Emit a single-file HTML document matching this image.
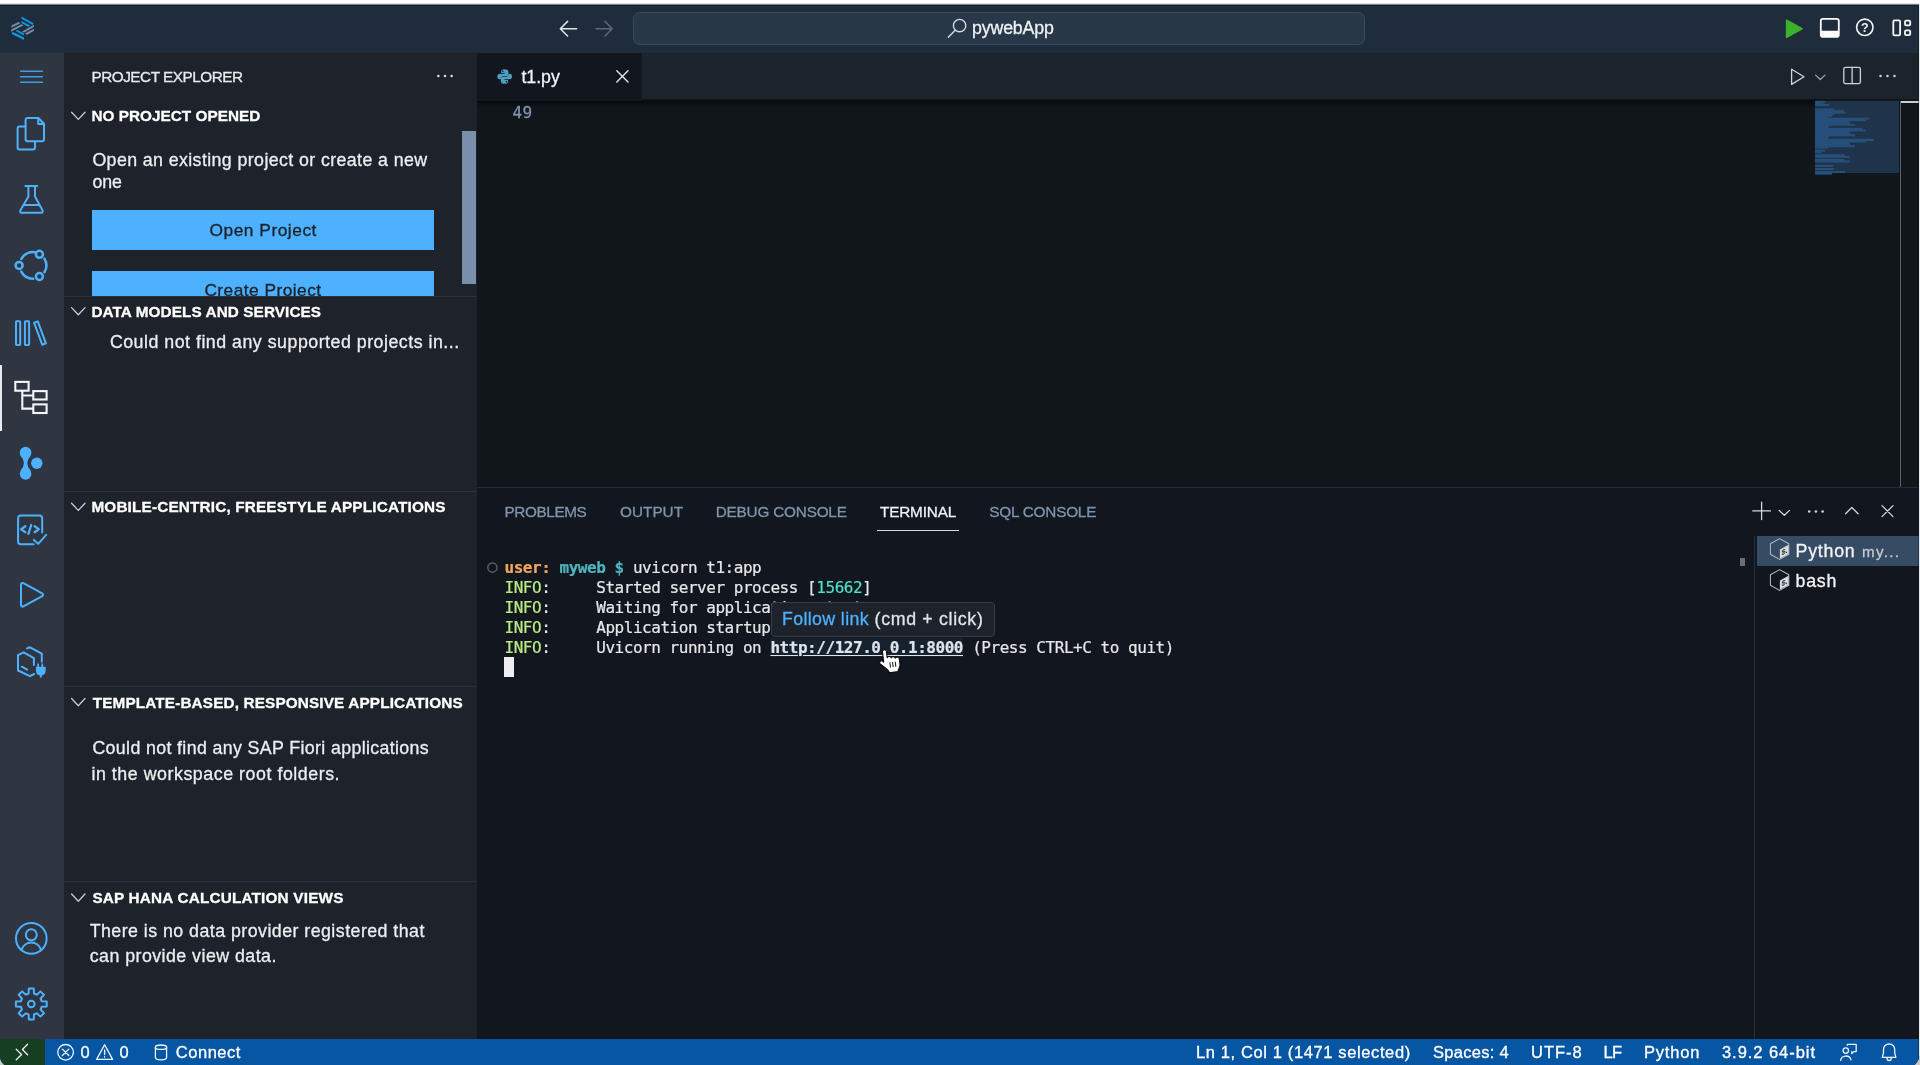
<!DOCTYPE html>
<html lang="en"><head><meta charset="utf-8"><title>pywebApp - SAP Business Application Studio</title>
<style>
html,body{margin:0;padding:0}
body{width:1920px;height:1065px;overflow:hidden;background:#c9c9c9;position:relative;font-family:"Liberation Sans",sans-serif}
.t{position:absolute;white-space:pre;display:block;font-family:"Liberation Sans",sans-serif;-webkit-text-stroke:0.3px currentColor}
.m{font-family:"DejaVu Sans Mono","Liberation Mono",monospace}
.a{position:absolute}
svg{position:absolute;left:0;top:0;overflow:visible}
#win{will-change:transform;position:absolute;left:0;top:0;width:1919px;height:1067px;overflow:hidden;border-radius:0 0 11px 11px;background:#12161e}
#titlebar{left:0;top:5px;width:1919px;height:48px;background:#1e2c3c}
#cmd{left:633px;top:12px;width:730px;height:31px;border:1px solid #3b4a5c;border-radius:7px;background:#283849}
#activity{left:0;top:53px;width:64px;height:986px;background:#2f3541}
#sidebar{left:64px;top:53px;width:413px;height:986px;background:#1d222b}
#tabs{left:477px;top:53px;width:1442px;height:46px;background:#1d232c}
#tab1{left:477px;top:53px;width:165px;height:47.5px;background:#12161e}
#editor{left:477px;top:99px;width:1442px;height:388px;background:#11161a}
#panel{left:477px;top:487px;width:1442px;height:552px;background:#12161e;border-top:1px solid #242c37;box-sizing:border-box}
#status{left:0;top:1039px;width:1919px;height:26px;background:#0756a3}
#remote{left:0;top:1039px;width:45px;height:26px;background:#153f20}
.sep{left:64px;width:413px;height:1px;background:#2b313c}
.btn{left:92px;width:342px;background:#4db1ff}
.term{position:absolute;left:504.5px;white-space:pre;font:400 16px/20px "DejaVu Sans Mono","Liberation Mono",monospace;letter-spacing:-0.463px;color:#e6e7e9;height:20px;-webkit-text-stroke:0.2px currentColor}
.term b{font-weight:700}
</style></head><body>
<div id="win">
<div class="a" style="left:0;top:0;width:1920px;height:3px;background:#fff"></div>
<div class="a" style="left:0;top:3px;width:1920px;height:1px;background:#e3e4e5"></div>
<div class="a" style="left:0;top:4px;width:1920px;height:1px;background:#7a828c"></div>

<!-- ================= TITLE BAR ================= -->
<div id="titlebar" class="a"></div>
<div class="a" style="left:0;top:5px;width:1919px;height:1px;background:#0f1f33"></div>
<div id="cmd" class="a"></div>
<span class="t" style="left:972px;top:17px;font-size:17.8px;line-height:22px;letter-spacing:-0.164px;color:#f0f2f4">pywebApp</span>
<svg width="1920" height="60" viewBox="0 0 1920 60">
  <!-- logo -->
  <g transform="translate(4,10) scale(0.033812)">
    <polygon points="515,195 875,395 850,445 515,262" fill="#0a9be0"/>
    <polygon points="520,322 770,462 720,505 520,385" fill="#0a9be0"/>
    <polygon points="222,458 430,352 485,390 222,525" fill="#748ca8"/>
    <polygon points="212,578 515,418 580,452 212,640" fill="#748ca8"/>
    <polygon points="340,622 392,588 590,690 590,755" fill="#0a9be0"/>
    <polygon points="232,655 282,655 592,815 592,885 232,708" fill="#0a9be0"/>
    <polygon points="528,640 882,438 882,502 600,668" fill="#748ca8"/>
    <polygon points="618,692 882,558 882,622 682,732" fill="#748ca8"/>
  </g>
  <!-- nav arrows -->
  <g fill="none" stroke="#e2e5e9" stroke-width="1.5" stroke-linecap="round" stroke-linejoin="round">
    <path d="M576.6,28.7 H560.3 M567.6,21.4 L560.3,28.7 L567.6,36"/>
  </g>
  <g fill="none" stroke="#5b6878" stroke-width="1.5" stroke-linecap="round" stroke-linejoin="round">
    <path d="M596,28.7 H612.2 M605,21.4 L612.2,28.7 L605,36"/>
  </g>
  <!-- search -->
  <g fill="none" stroke="#d5d9de" stroke-width="1.4" stroke-linecap="round">
    <circle cx="959.6" cy="25.6" r="6.2"/><path d="M955.2,30.2 L948.3,37.2"/>
  </g>
  <!-- run (green) -->
  <path d="M1786.6,20.2 L1802,28.7 L1786.6,37.3 Z" fill="#3cb22b" stroke="#3cb22b" stroke-width="1.6" stroke-linejoin="round"/>
  <!-- panel toggle -->
  <rect x="1820.8" y="18.9" width="18" height="18" rx="2.2" fill="none" stroke="#fafbfc" stroke-width="1.8"/>
  <path d="M1820.8,30.8 H1838.8 V35 a2,2 0 0 1 -2,2 H1822.8 a2,2 0 0 1 -2,-2 Z" fill="#fdfdfe"/>
  <!-- help -->
  <circle cx="1864.8" cy="27.3" r="8.2" fill="none" stroke="#f6f7f8" stroke-width="1.6"/>
  <text x="1864.8" y="31.8" text-anchor="middle" font-family="Liberation Sans, sans-serif" font-weight="700" font-size="12.5" fill="#f0f1f3">?</text>
  <!-- layout -->
  <g fill="none" stroke="#f6f7f8" stroke-width="1.8">
    <rect x="1893.3" y="20.3" width="6.8" height="15" rx="1.3"/>
    <rect x="1905" y="20.6" width="5.2" height="4.8" rx="1.2"/>
    <rect x="1905" y="30.3" width="5.2" height="4.8" rx="1.2"/>
  </g>
</svg>

<!-- ================= ACTIVITY BAR ================= -->
<div id="activity" class="a"></div>
<div class="a" style="left:0;top:365px;width:1.5px;height:66px;background:#e9ebee"></div>
<svg width="64" height="1040" viewBox="0 0 64 1040">
  <g fill="none" stroke="#3f9fe6" stroke-width="1.4" stroke-linecap="round">
    <path d="M20.6,71.3 H42.4 M20.6,76.8 H42.4 M20.6,82.2 H42.4"/>
  </g>
  <g fill="none" stroke="#4db1ff" stroke-width="2" stroke-linecap="round" stroke-linejoin="round">
    <!-- files -->
    <path d="M27.6,118 H38.4 L44,123.8 V139.2 a2,2 0 0 1 -2,2 H27.6 a2,2 0 0 1 -2,-2 V120 a2,2 0 0 1 2,-2 Z M38.2,118.4 V124 H43.8"/>
    <path d="M25.4,126.6 H19.6 a2,2 0 0 0 -2,2 V147.6 a2,2 0 0 0 2,2 H33 a2,2 0 0 0 2,-2 V141.4"/>
    <!-- flask -->
    <path d="M25.4,186.1 H37.2 M28.4,186.4 V196.6 L20.3,210.6 a1.4,1.4 0 0 0 1.2,2.1 H41.4 a1.4,1.4 0 0 0 1.2,-2.1 L35,196.6 V186.4 M24.6,205 H38.6"/>
    <!-- graph -->
    <g stroke-width="2.5"><path d="M44.4,258.55 A13.3,13.3 0 0 1 44.4,272.25 M33.23,278.7 A13.3,13.3 0 0 1 21.26,271.64 M21.37,258.95 A13.3,13.3 0 0 1 35.08,252.26"/>
    <circle cx="39.4" cy="254.3" r="3.5"/><circle cx="19.1" cy="265.4" r="3.5"/><circle cx="39.4" cy="276.5" r="3.5"/></g>
    <!-- books -->
    <rect x="16" y="321.3" width="4.2" height="23.6" rx="0.6"/>
    <rect x="24.9" y="321.3" width="4.2" height="23.6" rx="0.6"/>
    <path d="M34.1,322.7 L37.8,321.4 L45.9,343.3 L42.2,344.7 Z"/>
    <!-- code check -->
    <path d="M42.2,532.6 V518.4 a2.8,2.8 0 0 0 -2.8,-2.8 H20.9 a2.8,2.8 0 0 0 -2.8,2.8 V541.5 a2.8,2.8 0 0 0 2.8,2.8 H33.6"/>
    <path d="M33.8,539.9 L38.2,543.8 L46.2,534.9" />
    <path stroke-width="2.3" d="M25.4,526.2 L21.2,529.2 L25.4,532.2 M31.2,525 L28.4,533.8 M34.6,526.2 L38.8,529.2 L34.6,532.2"/>
    <!-- run -->
    <path d="M21,584.6 a1.6,1.6 0 0 1 2.4,-1.4 L42.2,593.4 a1.6,1.6 0 0 1 0,2.8 L23.4,606.4 a1.6,1.6 0 0 1 -2.4,-1.4 Z"/>
    <!-- box plug -->
    <path d="M33.9,665 V658.2 L23.7,652.3 L18,655.2 V670.5 L29.9,676.2 L34.2,674"/>
    <path d="M27,648.4 L30,647.3 L41.8,653.6 V661.8"/>
    <path d="M21.8,666.7 L27.2,669.6"/>
    <!-- account -->
    <circle cx="31.3" cy="938.4" r="15.3"/>
    <circle cx="31.3" cy="934.8" r="5.5"/>
    <path d="M21.6,949.8 a10.2,10.5 0 0 1 19.4,0"/>
    <!-- gear -->
    <path d="M28.61,993.54 L28.86,988.59 L33.74,988.59 L33.99,993.54 L36.8,994.7 L40.47,991.38 L43.92,994.83 L40.6,998.5 L41.76,1001.31 L46.71,1001.56 L46.71,1006.44 L41.76,1006.69 L40.6,1009.5 L43.92,1013.17 L40.47,1016.62 L36.8,1013.3 L33.99,1014.46 L33.74,1019.41 L28.86,1019.41 L28.61,1014.46 L25.8,1013.3 L22.13,1016.62 L18.68,1013.17 L22,1009.5 L20.84,1006.69 L15.89,1006.44 L15.89,1001.56 L20.84,1001.31 L22,998.5 L18.68,994.83 L22.13,991.38 L25.8,994.7Z"/>
    <circle cx="31.3" cy="1004" r="3.3"/>
  </g>
  <!-- plug (filled) -->
  <path d="M37.3,663.4 h1.7 v3.4 h2.4 v-3.4 h1.7 v3.4 h2.6 v3.6 a5.4,5.4 0 0 1 -4,5.2 v1.9 h-1.8 v-1.9 a5.4,5.4 0 0 1 -4,-5.2 v-3.6 h1.4 Z" fill="#4db1ff"/>
  <!-- tree (active, white) -->
  <g fill="none" stroke="#f4f5f6" stroke-width="2.1">
    <rect x="15.3" y="381.9" width="13.3" height="8.8"/>
    <rect x="33.3" y="391.1" width="13.3" height="8.4"/>
    <rect x="33.3" y="404.4" width="13.3" height="8.6"/>
    <path d="M22.3,391 V408.6 H33 M22.3,395.5 H33"/>
  </g>
  <!-- source control blob -->
  <g fill="#4db1ff">
    <circle cx="25.6" cy="452.5" r="5.8"/><circle cx="25.6" cy="474" r="5.8"/><circle cx="36.8" cy="463.2" r="5.7"/>
    <path d="M20.3,455.6 Q27.6,463.2 20.3,470.8 L30.9,470.8 Q23.6,463.2 30.9,455.6 Z"/>
  </g>
</svg>

<!-- ================= SIDE BAR ================= -->
<div id="sidebar" class="a"></div>
<span class="t" style="left:91.4px;top:67px;font-size:15.3px;line-height:19px;letter-spacing:-0.467px;color:#e8eaed">PROJECT EXPLORER</span>
<span class="t" style="left:91.4px;top:106px;font-size:15.3px;line-height:19px;font-weight:700;letter-spacing:0.041px;color:#ffffff">NO PROJECT OPENED</span>
<span class="t" style="left:92.4px;top:149px;font-size:17.8px;line-height:22px;letter-spacing:0.395px;color:#eceef0">Open an existing project or create a new</span>
<span class="t" style="left:92.4px;top:171px;font-size:17.8px;line-height:22px;letter-spacing:-0.089px;color:#eceef0">one</span>
<div class="a btn" style="top:210px;height:40px"></div>
<span class="t" style="left:209.5px;top:219px;font-size:17.33px;line-height:22px;letter-spacing:0.525px;color:#1b2129">Open Project</span>
<div class="a" style="left:92px;top:271px;width:342px;height:26px;overflow:hidden;background:#4db1ff"></div>
<div class="a" style="left:64px;top:260px;width:413px;height:37px;overflow:hidden"><div style="position:absolute;left:-64px;top:-260px;width:600px;height:400px"><span class="t" style="left:204.4px;top:279px;font-size:17.33px;line-height:22px;letter-spacing:0.458px;color:#1b2129">Create Project</span></div></div>
<div class="a" style="left:461.5px;top:131px;width:14px;height:153px;background:#798fab"></div>
<div class="a sep" style="top:296px"></div>
<span class="t" style="left:91.4px;top:302px;font-size:15.3px;line-height:19px;font-weight:700;letter-spacing:0.095px;color:#ffffff">DATA MODELS AND SERVICES</span>
<span class="t" style="left:109.9px;top:331px;font-size:17.8px;line-height:22px;letter-spacing:0.502px;color:#eceef0">Could not find any supported projects in...</span>
<div class="a sep" style="top:491px"></div>
<span class="t" style="left:91.4px;top:497px;font-size:15.3px;line-height:19px;font-weight:700;letter-spacing:0.174px;color:#ffffff">MOBILE-CENTRIC, FREESTYLE APPLICATIONS</span>
<div class="a sep" style="top:686px"></div>
<span class="t" style="left:92.7px;top:693px;font-size:15.3px;line-height:19px;font-weight:700;letter-spacing:0.148px;color:#ffffff">TEMPLATE-BASED, RESPONSIVE APPLICATIONS</span>
<span class="t" style="left:92.4px;top:737px;font-size:17.8px;line-height:22px;letter-spacing:0.362px;color:#eceef0">Could not find any SAP Fiori applications</span>
<span class="t" style="left:91.4px;top:763px;font-size:17.8px;line-height:22px;letter-spacing:0.548px;color:#eceef0">in the workspace root folders.</span>
<div class="a sep" style="top:881px"></div>
<span class="t" style="left:92.4px;top:888px;font-size:15.3px;line-height:19px;font-weight:700;letter-spacing:0.192px;color:#ffffff">SAP HANA CALCULATION VIEWS</span>
<span class="t" style="left:89.7px;top:920px;font-size:17.8px;line-height:22px;letter-spacing:0.461px;color:#eceef0">There is no data provider registered that</span>
<span class="t" style="left:89.7px;top:945px;font-size:17.8px;line-height:22px;letter-spacing:0.463px;color:#eceef0">can provide view data.</span>
<svg width="480" height="1040" viewBox="0 0 480 1040">
  <g fill="#d9dce0"><circle cx="438.4" cy="76" r="1.25"/><circle cx="445" cy="76" r="1.25"/><circle cx="451.6" cy="76" r="1.25"/></g>
  <g fill="none" stroke="#c9cdd3" stroke-width="1.3" stroke-linecap="round" stroke-linejoin="round"><path d="M71.6,112.2 L78.3,119.4 L85,112.2"/><path d="M71.6,307.6 L78.3,314.8 L85,307.6"/><path d="M71.6,503.2 L78.3,510.4 L85,503.2"/><path d="M71.6,698.5 L78.3,705.7 L85,698.5"/><path d="M71.6,894 L78.3,901.2 L85,894"/></g>
</svg>

<!-- ================= EDITOR ================= -->
<div id="tabs" class="a"></div>
<div id="editor" class="a"></div>
<div class="a" style="left:477px;top:99px;width:1338px;height:9px;background:linear-gradient(rgba(5,7,10,0) 0,rgba(5,7,10,0.75) 28%,rgba(5,7,10,0.45) 50%,rgba(5,7,10,0) 100%)"></div>
<div id="tab1" class="a"></div>
<span class="t" style="left:521.4px;top:66px;font-size:17.8px;line-height:22px;letter-spacing:-0.015px;color:#f2f3f5">t1.py</span>
<span class="t m" style="left:512.6px;top:103px;font-size:16px;line-height:20px;letter-spacing:0.367px;color:#7f94ad">49</span>
<div class="a" style="left:1815px;top:101px;width:84px;height:72px;background:#1f344b"></div>
<div class="a" style="left:1900px;top:101px;width:1px;height:386px;background:#56616e"></div>
<div class="a" style="left:1901px;top:101px;width:18px;height:2px;background:#c9cdd2"></div>
<svg width="1920" height="200" viewBox="0 0 1920 200">
  <g fill="#26507b"><rect x="1815.1" y="100.85" width="9.8" height="2"/><rect x="1815.1" y="102.4" width="8.3" height="2"/><rect x="1815.1" y="103.95" width="13.9" height="2"/><rect x="1815.1" y="108.6" width="19.1" height="2"/><rect x="1815.1" y="110.14" width="28.9" height="2"/><rect x="1815.1" y="111.69" width="30.7" height="2"/><rect x="1815.1" y="113.24" width="19.1" height="2"/><rect x="1815.1" y="114.79" width="17" height="2"/><rect x="1815.1" y="116.34" width="12.9" height="1.79"/><rect x="1815.1" y="117.69" width="53.7" height="1.9"/><rect x="1815.1" y="119.13" width="50.6" height="2"/><rect x="1815.1" y="120.68" width="34.1" height="2"/><rect x="1815.1" y="122.23" width="35.1" height="2"/><rect x="1815.1" y="123.78" width="39.8" height="2"/><rect x="1815.1" y="125.33" width="13.9" height="2"/><rect x="1815.1" y="126.88" width="12.9" height="1.48"/><rect x="1815.1" y="127.91" width="47.5" height="2"/><rect x="1815.1" y="129.46" width="50.6" height="2"/><rect x="1815.1" y="131.01" width="34.1" height="2"/><rect x="1815.1" y="132.56" width="35.1" height="2"/><rect x="1815.1" y="134.11" width="39.8" height="2.31"/><rect x="1815.1" y="135.97" width="13.9" height="2"/><rect x="1815.1" y="137.52" width="12.9" height="1.69"/><rect x="1815.1" y="138.76" width="58.9" height="2.31"/><rect x="1815.1" y="140.62" width="50.6" height="1.79"/><rect x="1815.1" y="141.96" width="34.1" height="2"/><rect x="1815.1" y="143.51" width="35.1" height="2"/><rect x="1815.1" y="145.06" width="39.8" height="2.21"/><rect x="1815.1" y="146.82" width="12.9" height="1.69"/><rect x="1815.1" y="149.61" width="9.8" height="2"/><rect x="1815.1" y="151.16" width="6.7" height="2"/><rect x="1815.1" y="154.26" width="29.8" height="2"/><rect x="1815.1" y="155.81" width="34.6" height="2"/><rect x="1815.1" y="158.9" width="28.9" height="2"/><rect x="1815.1" y="160.45" width="34.6" height="2"/><rect x="1815.1" y="164.9" width="17.8" height="2"/><rect x="1815.1" y="168" width="19.1" height="2"/><rect x="1815.1" y="171.1" width="30" height="2"/><rect x="1815.1" y="172.64" width="16.8" height="2"/></g>
  <!-- python file icon -->
  <g transform="translate(496.8,68.7) scale(0.967,0.96)"><path d="M7.9,0.5C5.5,0.5 4.6,1.5 4.6,2.9L4.6,4.6L8.1,4.6L8.1,5.2L3.2,5.2C1.5,5.2 0.5,6.5 0.5,8.2C0.5,10 1.4,11.1 2.9,11.1L4.3,11.1L4.3,9.9C4.3,8.7 5.3,7.9 6.5,7.9L10,7.9C11.2,7.9 12,7 12,5.9L12,2.9C12,1.5 10.6,0.5 7.9,0.5Z" fill="#4f9dc2"/><path d="M8.3,15.8C10.7,15.8 11.6,14.8 11.6,13.4L11.6,11.7L8.1,11.7L8.1,11.1L13,11.1C14.7,11.1 15.7,9.8 15.7,8.1C15.7,6.3 14.8,5.2 13.3,5.2L11.9,5.2L11.9,6.4C11.9,7.6 10.9,8.4 9.7,8.4L6.2,8.4C5,8.4 4.2,9.3 4.2,10.4L4.2,13.4C4.2,14.8 5.6,15.8 8.3,15.8Z" fill="#4f9dc2"/><circle cx="6.2" cy="2.6" r="0.8" fill="#12161d"/><circle cx="10" cy="13.7" r="0.8" fill="#12161d"/></g>
  <!-- tab close -->
  <path d="M616.8,70.7 L628,81.9 M628,70.7 L616.8,81.9" stroke="#e4e6e9" stroke-width="1.4" stroke-linecap="round"/>
  <!-- editor actions -->
  <g fill="none" stroke="#cfd3d8" stroke-width="1.3" stroke-linejoin="round" stroke-linecap="round">
    <path d="M1791.6,69.2 L1804,76.8 L1791.6,84.4 Z"/>
    <path stroke="#9aa1aa" d="M1815.6,75.1 L1820.3,79.5 L1825,75.1"/>
    <rect x="1843.8" y="67.3" width="16.6" height="16.4" rx="1.6"/><path d="M1852.1,67.3 V83.7"/>
  </g>
  <g fill="#cfd3d8"><circle cx="1880.5" cy="76" r="1.25"/><circle cx="1887.5" cy="76" r="1.25"/><circle cx="1894.5" cy="76" r="1.25"/></g>
</svg>

<!-- ================= PANEL ================= -->
<div id="panel" class="a"></div>
<span class="t" style="left:504.4px;top:502px;font-size:15.3px;line-height:19px;letter-spacing:-0.372px;color:#7f94ad">PROBLEMS</span>
<span class="t" style="left:620px;top:502px;font-size:15.3px;line-height:19px;letter-spacing:0.032px;color:#7f94ad">OUTPUT</span>
<span class="t" style="left:715.7px;top:502px;font-size:15.3px;line-height:19px;letter-spacing:-0.187px;color:#7f94ad">DEBUG CONSOLE</span>
<span class="t" style="left:880px;top:502px;font-size:15.3px;line-height:19px;letter-spacing:-0.162px;color:#f0f1f3">TERMINAL</span>
<span class="t" style="left:989.3px;top:502px;font-size:15.3px;line-height:19px;letter-spacing:-0.206px;color:#7f94ad">SQL CONSOLE</span>
<div class="a" style="left:877px;top:530px;width:82px;height:1px;background:#d9dbde"></div>
<div class="term" style="top:558px"><b style="color:#f5a45c">user:</b> <b style="color:#4fb4c1">myweb $</b> uvicorn t1:app</div>
<div class="term" style="top:578px"><span style="color:#b9ea83">INFO</span>:     Started server process [<span style="color:#4fe0c6">15662</span>]</div>
<div class="term" style="top:598px"><span style="color:#b9ea83">INFO</span>:     Waiting for application startup.</div>
<div class="term" style="top:618px"><span style="color:#b9ea83">INFO</span>:     Application startup complete.</div>
<div class="term" style="top:638px"><span style="color:#b9ea83">INFO</span>:     Uvicorn running on <b style="color:#dfe3ea;background:#17222f;text-decoration:underline;text-underline-offset:2px">http://127.0.0.1:8000</b> (Press CTRL+C to quit)</div>
<div class="a" style="left:504px;top:657px;width:10px;height:20px;background:#eceef1"></div>
<!-- hover tooltip -->
<div class="a" style="left:770.5px;top:602px;width:224.5px;height:35px;box-sizing:border-box;border:1px solid #363e4a;border-radius:4px;background:#1d222b"></div>
<span class="t" style="left:782px;top:608px;font-size:17.8px;line-height:22px;letter-spacing:0.364px;color:#4db1ff">Follow link</span>
<span class="t" style="left:874.6px;top:608px;font-size:17.8px;line-height:22px;letter-spacing:0.662px;color:#e0e3e7">(cmd + click)</span>
<!-- terminal tabs list -->
<div class="a" style="left:1754px;top:536px;width:1px;height:503px;background:#27303c"></div>
<div class="a" style="left:1756.5px;top:535.5px;width:163px;height:30.5px;background:#364b64"></div>
<div class="a" style="left:1740px;top:558px;width:5px;height:8px;background:#6c7076"></div>
<span class="t" style="left:1795.6px;top:540px;font-size:17.8px;line-height:22px;letter-spacing:0.746px;color:#f2f3f5">Python</span>
<span class="t" style="left:1862px;top:542px;font-size:15.2px;line-height:19px;letter-spacing:1.311px;color:#c3c9d1">my...</span>
<span class="t" style="left:1795.6px;top:570px;font-size:17.8px;line-height:22px;letter-spacing:0.71px;color:#f2f3f5">bash</span>
<svg width="1920" height="700" viewBox="0 0 1920 700">
  <circle cx="492.4" cy="567.6" r="4.6" fill="none" stroke="#5c6169" stroke-width="1.4"/>
  <g fill="none" stroke="#d5d8dd" stroke-width="1.3" stroke-linecap="round" stroke-linejoin="round">
    <path d="M1761.6,502.2 V519.6 M1752.8,510.9 H1770.4"/>
    <path d="M1779.1,510.4 L1784.3,515.3 L1789.5,510.4"/>
    <path d="M1845.5,513.8 L1851.8,507.5 L1858.1,513.8"/>
    <path d="M1882,505.6 L1893,516.6 M1893,505.6 L1882,516.6"/>
  </g>
  <g fill="#d5d8dd"><circle cx="1809.2" cy="511.5" r="1.25"/><circle cx="1815.9" cy="511.5" r="1.25"/><circle cx="1822.6" cy="511.5" r="1.25"/></g>
  <polygon points="1779.6,538.6 1788.8,543.8 1788.8,554.2 1779.6,559.4 1770.4,554.2 1770.4,543.8" fill="none" stroke="#b3b8c0" stroke-width="1.05" stroke-linejoin="round"/><polygon points="1779.9,549.6 1788.5,544.8 1788.5,553.9 1779.9,558.6" fill="#d9dce0"/><text x="1781.4" y="555.6" font-family="Liberation Sans, sans-serif" font-size="7.5" font-weight="700" fill="#333a44" transform="skewY(-27)" style="transform-origin:1781.4px 555.6px">$.</text>
  <polygon points="1779.6,569.6 1788.8,574.8 1788.8,585.2 1779.6,590.4 1770.4,585.2 1770.4,574.8" fill="none" stroke="#b3b8c0" stroke-width="1.05" stroke-linejoin="round"/><polygon points="1779.9,580.6 1788.5,575.8 1788.5,584.9 1779.9,589.6" fill="#d9dce0"/><text x="1781.4" y="586.6" font-family="Liberation Sans, sans-serif" font-size="7.5" font-weight="700" fill="#333a44" transform="skewY(-27)" style="transform-origin:1781.4px 586.6px">$.</text>
  <!-- mouse pointer (hand) -->
  <g transform="rotate(-7 889 661)">
  <path d="M883.6,651.2 C883.6,650 884.5,649.2 885.6,649.2 C886.7,649.2 887.6,650 887.6,651.2 L887.6,657.6 C887.9,656.8 888.7,656.4 889.6,656.4 C890.7,656.4 891.5,657.1 891.6,658.2 C891.9,657.6 892.7,657.2 893.5,657.2 C894.6,657.2 895.4,657.9 895.6,658.9 C895.9,658.4 896.6,658.1 897.4,658.1 C898.6,658.1 899.5,659 899.5,660.2 L899.5,665.5 C899.5,667.5 898.9,668.6 898,669.8 L897,671.2 L897,672.6 L887.6,672.6 L887.6,671.2 C886.6,669.6 885.2,667.8 883.4,666.2 L880.2,663.2 C879.2,662.2 879.3,660.8 880.3,660.2 C881.2,659.6 882.3,659.9 883,660.6 L883.6,661.4 Z" fill="#fff" stroke="#05070a" stroke-width="1.1" stroke-linejoin="round"/>
  <path d="M889.7,662.4 V667.6 M892.4,662.4 V667.6 M895.1,662.4 V667.6" fill="none" stroke="#05070a" stroke-width="0.9"/>
  </g>
</svg>

<!-- ================= STATUS BAR ================= -->
<div id="status" class="a"></div>
<div id="remote" class="a"></div>
<span class="t" style="left:80.5px;top:1042px;font-size:16.5px;line-height:21px;letter-spacing:0px;color:#ffffff">0</span><span class="t" style="left:119.5px;top:1042px;font-size:16.5px;line-height:21px;letter-spacing:0px;color:#ffffff">0</span><span class="t" style="left:175.8px;top:1042px;font-size:16.5px;line-height:21px;letter-spacing:0.521px;color:#ffffff">Connect</span><span class="t" style="left:1196px;top:1042px;font-size:16.5px;line-height:21px;letter-spacing:0.618px;color:#ffffff">Ln 1, Col 1 (1471 selected)</span><span class="t" style="left:1433px;top:1042px;font-size:16.5px;line-height:21px;letter-spacing:0.3px;color:#ffffff">Spaces: 4</span><span class="t" style="left:1531px;top:1042px;font-size:16.5px;line-height:21px;letter-spacing:0.983px;color:#ffffff">UTF-8</span><span class="t" style="left:1603.4px;top:1042px;font-size:16.5px;line-height:21px;letter-spacing:-0.577px;color:#ffffff">LF</span><span class="t" style="left:1644px;top:1042px;font-size:16.5px;line-height:21px;letter-spacing:0.801px;color:#ffffff">Python</span><span class="t" style="left:1722px;top:1042px;font-size:16.5px;line-height:21px;letter-spacing:0.948px;color:#ffffff">3.9.2 64-bit</span>
<svg width="1920" height="1065" viewBox="0 0 1920 1065">
  <g fill="none" stroke="#f2f4f6" stroke-width="1.3" stroke-linecap="round" stroke-linejoin="round">
    <path d="M16.2,1049.3 L21.6,1054.5 L16.2,1059.7 M27.6,1044.3 L22.4,1049.5 L27.6,1054.7"/>
    <circle cx="65.6" cy="1052.3" r="7.8"/><path d="M62.4,1049.1 L68.8,1055.5 M68.8,1049.1 L62.4,1055.5"/>
    <path d="M104.6,1044.8 L112.6,1059.4 H96.6 Z"/><path d="M104.6,1050 V1054.6 M104.6,1056.7 V1057.1"/>
    <path d="M155.4,1047.2 V1057.6 a5.6,2.2 0 0 0 11.2,0 V1047.2"/><ellipse cx="161" cy="1047.2" rx="5.6" ry="2.2"/>
    <!-- feedback -->
    <circle cx="1845.8" cy="1050.6" r="2.7"/><path d="M1840.6,1060.4 a5.3,5 0 0 1 10.4,-0.6"/>
    <path d="M1847.4,1045.2 V1044.4 H1856.2 V1051.6 H1853.8 L1851.8,1053.6 V1051.6"/>
    <!-- bell -->
    <path d="M1882.3,1057.3 H1895.9 L1894.7,1052.6 V1049.4 a5.6,5.4 0 0 0 -11.2,0 V1052.6 Z M1887,1058.2 a2.1,2.3 0 0 0 4.2,0"/>
  </g>
</svg>
<div class="a" style="left:1918px;top:5px;width:1px;height:1062px;background:rgba(4,10,22,0.4)"></div>
</div>
<div class="a" style="left:1919px;top:0;width:1px;height:1056px;background:#e6e8ea"></div>
<div class="a" style="left:1919px;top:0;width:1px;height:4px;background:#fff"></div>
</body></html>
